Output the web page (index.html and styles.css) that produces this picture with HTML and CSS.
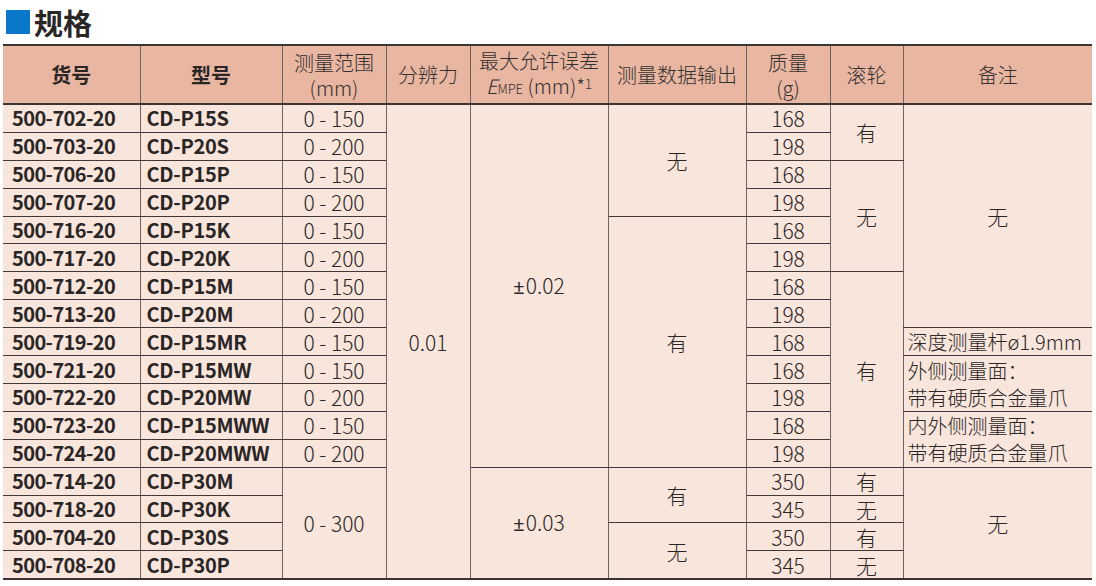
FILE: index.html
```html
<!DOCTYPE html>
<html lang="zh-CN">
<head>
<meta charset="utf-8">
<title>规格</title>
<link rel="stylesheet" href="styles.css">
</head>
<body>
<div class="page">
  <h1 class="title"><span class="mark"></span>规格</h1>
  <table class="spec">
    <colgroup>
      <col class="c1"><col class="c2"><col class="c3"><col class="c4"><col class="c5"><col class="c6"><col class="c7"><col class="c8"><col class="c9">
    </colgroup>
    <thead>
      <tr>
        <th class="strong">货号</th>
        <th class="strong">型号</th>
        <th>测量范围<br>(mm)</th>
        <th>分辨力</th>
        <th>最大允许误差<br><i>E</i><span class="mpe">MPE</span> (mm)*<span class="sup">1</span></th>
        <th>测量数据输出</th>
        <th>质量<br>(g)</th>
        <th>滚轮</th>
        <th>备注</th>
      </tr>
    </thead>
    <tbody>
      <tr><td class="code">500-702-20</td><td class="model">CD-P15S</td><td>0 - 150</td><td rowspan="17">0.01</td><td rowspan="13"><span class="pm">±</span>0.02</td><td rowspan="4">无</td><td>168</td><td rowspan="2">有</td><td rowspan="8">无</td></tr>
      <tr><td class="code">500-703-20</td><td class="model">CD-P20S</td><td>0 - 200</td><td>198</td></tr>
      <tr><td class="code">500-706-20</td><td class="model">CD-P15P</td><td>0 - 150</td><td>168</td><td rowspan="4">无</td></tr>
      <tr><td class="code">500-707-20</td><td class="model">CD-P20P</td><td>0 - 200</td><td>198</td></tr>
      <tr><td class="code">500-716-20</td><td class="model">CD-P15K</td><td>0 - 150</td><td rowspan="9">有</td><td>168</td></tr>
      <tr><td class="code">500-717-20</td><td class="model">CD-P20K</td><td>0 - 200</td><td>198</td></tr>
      <tr><td class="code">500-712-20</td><td class="model">CD-P15M</td><td>0 - 150</td><td>168</td><td rowspan="7">有</td></tr>
      <tr><td class="code">500-713-20</td><td class="model">CD-P20M</td><td>0 - 200</td><td>198</td></tr>
      <tr><td class="code">500-719-20</td><td class="model">CD-P15MR</td><td>0 - 150</td><td>168</td><td class="note">深度测量杆ø1.9mm</td></tr>
      <tr><td class="code">500-721-20</td><td class="model">CD-P15MW</td><td>0 - 150</td><td>168</td><td class="note" rowspan="2">外侧测量面：<br>带有硬质合金量爪</td></tr>
      <tr><td class="code">500-722-20</td><td class="model">CD-P20MW</td><td>0 - 200</td><td>198</td></tr>
      <tr><td class="code">500-723-20</td><td class="model">CD-P15MWW</td><td>0 - 150</td><td>168</td><td class="note" rowspan="2">内外侧测量面：<br>带有硬质合金量爪</td></tr>
      <tr><td class="code">500-724-20</td><td class="model">CD-P20MWW</td><td>0 - 200</td><td>198</td></tr>
      <tr><td class="code">500-714-20</td><td class="model">CD-P30M</td><td rowspan="4">0 - 300</td><td rowspan="4"><span class="pm">±</span>0.03</td><td rowspan="2">有</td><td>350</td><td>有</td><td rowspan="4">无</td></tr>
      <tr><td class="code">500-718-20</td><td class="model">CD-P30K</td><td>345</td><td>无</td></tr>
      <tr><td class="code">500-704-20</td><td class="model">CD-P30S</td><td rowspan="2">无</td><td>350</td><td>有</td></tr>
      <tr><td class="code">500-708-20</td><td class="model">CD-P30P</td><td>345</td><td>无</td></tr>
    </tbody>
  </table>
</div>
</body>
</html>
```
FILE: styles.css
```css
html, body {
  margin: 0;
  padding: 0;
  background: #ffffff;
}

body {
  font-family: "Noto Sans CJK SC", "Noto Sans", sans-serif;
  color: #2b2626;
}

.page {
  padding: 5px 4px 0 3px;
}

.title {
  display: flex;
  align-items: center;
  margin: 0;
  height: 34px;
  font-size: 29px;
  font-weight: 700;
  line-height: 34px;
  color: #2b2626;
  padding-left: 3px;
}

.title .mark {
  width: 24px;
  height: 24px;
  background: #0a78c8;
  margin-right: 4px;
}

.spec {
  margin-top: 5px;
  width: 1089px;
  border-collapse: collapse;
  table-layout: fixed;
  border-top: 2.5px solid #3a3434;
  border-bottom: 2.5px solid #3a3434;
}

.c1 { width: 137px; }
.c2 { width: 142px; }
.c3 { width: 104px; }
.c4 { width: 84px; }
.c5 { width: 138px; }
.c6 { width: 138px; }
.c7 { width: 84px; }
.c8 { width: 73px; }
.c9 { width: 189px; }

.spec th {
  background: #e9b6a2;
  height: 57px;
  padding: 0;
  font-size: 20px;
  font-weight: 300;
  line-height: 25px;
  text-align: center;
  vertical-align: middle;
  color: #333030;
  border-left: 1.5px solid #6d6361;
  border-right: 1.5px solid #6d6361;
  border-bottom: 2.5px solid #3a3434;
}

.spec th.strong {
  font-weight: 700;
  color: #2b2626;
}

.spec th:first-child { border-left: none; }
.spec th:last-child { border-right: none; }

.spec th i {
  font-style: italic;
}

.spec .mpe {
  font-size: 13px;
}

.spec .sup {
  font-size: 13px;
  vertical-align: 5px;
  line-height: 0;
}

.spec td {
  background: #f8e5dc;
  height: 26.9px;
  padding: 0;
  font-size: 21px;
  font-weight: 300;
  line-height: 26px;
  text-align: center;
  vertical-align: middle;
  border: 1px solid #403838;
  border-left-color: #6d6361;
  border-right-color: #6d6361;
  white-space: nowrap;
}

.spec td.code {
  border-left: none;
  text-align: left;
  padding-left: 9px;
  font-size: 20px;
  font-weight: 700;
  letter-spacing: -0.6px;
}

.spec td.model {
  text-align: left;
  padding-left: 6px;
  font-size: 20px;
  font-weight: 700;
  letter-spacing: -0.3px;
}

.spec .pm {
  font-family: "Noto Sans", "Open Sans", sans-serif;
  font-weight: 400;
  font-size: 20px;
  margin-right: 1px;
}

.spec td.note {
  text-align: left;
  padding-left: 4px;
  font-size: 20px;
  line-height: 27px;
}

.spec tr > td:last-child {
  border-right: none;
}
```
